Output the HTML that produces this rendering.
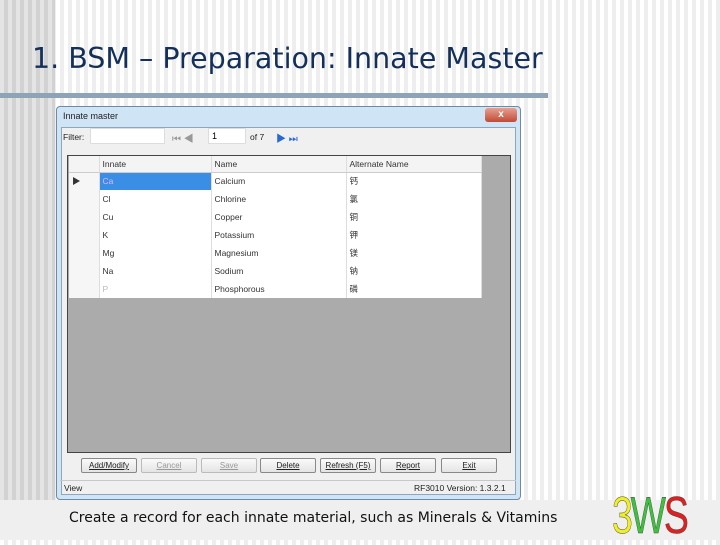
<!DOCTYPE html>
<html><head><meta charset="utf-8"><style>
*{margin:0;padding:0;box-sizing:border-box}
body{width:720px;height:540px;overflow:hidden;position:relative;font-family:"Liberation Sans","Noto Sans CJK SC",sans-serif;
background:repeating-linear-gradient(90deg,#fff 0,#fff 4px,#eeeeee 4px,#eeeeee 8px);}
.lstripe{position:absolute;left:0;top:0;width:55px;height:500px;background:repeating-linear-gradient(90deg,#e4e4e4 0,#e4e4e4 4px,#d2d2d2 4px,#d2d2d2 8px)}
h1{position:absolute;left:32px;top:42px;font-family:"DejaVu Sans",sans-serif;font-weight:normal;font-size:28.5px;color:#14305a;white-space:nowrap}
.line{position:absolute;left:0;top:93px;width:548px;height:5px;background:#8fa2b6}
.win{position:absolute;left:56px;top:106px;width:465px;height:394px;background:#cfe4f4;border:1px solid #6f8aa5;border-radius:4px}
.inner{position:absolute;left:4px;top:20px;width:455px;height:368px;background:#f0f0f0;border:1px solid #8fa6bc}
.tt{position:absolute;left:6px;top:4px;font-size:9px;color:#222}
.x{position:absolute;left:428px;top:1px;width:32px;height:14px;background:linear-gradient(#e8a090,#c04a36);border-radius:3px;color:#fff;font-size:10px;text-align:center;line-height:13px;font-weight:bold}
.s{position:absolute;font-size:8.5px;color:#222;white-space:nowrap}
.grid{position:absolute;left:67px;top:155px;width:444px;height:298px;background:#ababab;border:1px solid #444}
table{position:absolute;left:1px;top:0;border-collapse:collapse;background:#fff;font-size:8.5px;color:#333}
td{height:18px;border-right:1px solid #ddd;padding-left:3px;white-space:nowrap}
td:first-child{background:#f6f6f6}
tr.h td{height:16px;background:#f4f4f4;border-bottom:1px solid #ccc}
.btn{position:absolute;top:458px;width:56px;height:15px;border:1px solid #888;border-radius:2px;background:linear-gradient(#fafafa,#e4e4e4);font-size:8px;text-align:center;line-height:13px;color:#222;text-decoration:underline}
.dis{color:#999;border-color:#bbb}
</style></head><body>
<div class="lstripe"></div>
<h1>1. BSM – Preparation: Innate Master</h1>
<div class="line"></div>
<div class="win"><div class="tt">Innate master</div><div class="x">x</div><div class="inner"></div></div>
<div class="s" style="left:63px;top:132px">Filter:</div>
<div style="position:absolute;left:90px;top:128px;width:75px;height:16px;background:#fff;border:1px solid #ddd"></div>
<div class="s" style="left:172px;top:130px;color:#999;font-size:10px">⏮ ◀</div>
<div style="position:absolute;left:208px;top:128px;width:38px;height:16px;background:#fff;border:1px solid #ddd;font-size:9px;padding:2px 3px">1</div>
<div class="s" style="left:250px;top:132px">of 7</div>
<div class="s" style="left:276px;top:130px;color:#2a6ad0;font-size:10px">▶ ⏭</div>
<div class="grid">
<table>
<tr class="h"><td style="width:30px"></td><td style="width:112px">Innate</td><td style="width:135px">Name</td><td style="width:135px">Alternate Name</td></tr>
<tr><td>▶</td><td style="background:#3a8ee6;color:#dbe">Ca</td><td>Calcium</td><td>钙</td></tr>
<tr><td></td><td>Cl</td><td>Chlorine</td><td>氯</td></tr>
<tr><td></td><td>Cu</td><td>Copper</td><td>铜</td></tr>
<tr><td></td><td>K</td><td>Potassium</td><td>钾</td></tr>
<tr><td></td><td>Mg</td><td>Magnesium</td><td>镁</td></tr>
<tr><td></td><td>Na</td><td>Sodium</td><td>钠</td></tr>
<tr><td></td><td style="color:#bbb">P</td><td>Phosphorous</td><td>磷</td></tr>
</table></div>
<div class="btn" style="left:81px">Add/Modify</div>
<div class="btn dis" style="left:141px">Cancel</div>
<div class="btn dis" style="left:201px">Save</div>
<div class="btn" style="left:260px">Delete</div>
<div class="btn" style="left:320px">Refresh (F5)</div>
<div class="btn" style="left:380px">Report</div>
<div class="btn" style="left:441px">Exit</div>
<div style="position:absolute;left:60px;top:480px;width:456px;height:1px;background:#c8c8c8"></div>
<div class="s" style="left:64px;top:483px">View</div>
<div class="s" style="left:414px;top:483px">RF3010 Version: 1.3.2.1</div>
<div style="position:absolute;left:0;top:500px;width:720px;height:40px;background:#efefef"></div>
<div class="s" style="left:69px;top:510px;font-size:14px;font-family:'DejaVu Sans',sans-serif;color:#111">Create a record for each innate material, such as Minerals &amp; Vitamins</div>
<div style="position:absolute;left:612px;top:490px;font-size:52px;font-family:'Liberation Sans',sans-serif;letter-spacing:-3px;line-height:52px;transform:scaleX(0.72);transform-origin:left;-webkit-text-stroke:0.5px #444"><span style="color:#f0f020">3</span><span style="color:#3ec23e">W</span><span style="color:#e02020">S</span></div>
</body></html>
